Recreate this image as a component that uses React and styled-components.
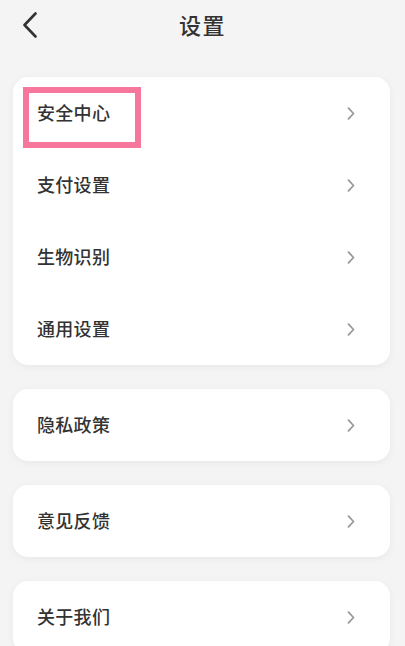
import React from "react";
import styled, { createGlobalStyle } from "styled-components";

const Global = createGlobalStyle`
  html, body {
    margin: 0;
    padding: 0;
    background: #f4f4f4;
  }
  * {
    box-sizing: border-box;
  }
`;

const Page = styled.div`
  min-height: 100vh;
  background: #f4f4f4;
  font-family: "Noto Sans CJK SC", "Noto Sans", sans-serif;
  color: #333;
`;

const Header = styled.header`
  position: relative;
  height: 48px;
  display: flex;
  align-items: center;
  justify-content: center;
`;

const Back = styled.button`
  position: absolute;
  left: 18px;
  top: 9px;
  width: 24px;
  height: 32px;
  padding: 0;
  border: 0;
  background: none;
  display: flex;
  align-items: center;
  justify-content: center;
`;

const Title = styled.h1`
  margin: 0;
  font-size: 22px;
  line-height: 1;
  font-weight: 500;
  letter-spacing: 1.5px;
  color: #333;
`;

const List = styled.div`
  display: flex;
  flex-direction: column;
  gap: 24px;
  padding: 29px 15px 0 13px;
`;

const Card = styled.section`
  background: #fff;
  border-radius: 15px;
  box-shadow: 0 2px 8px rgba(0, 0, 0, 0.05);
  overflow: hidden;
`;

const Row = styled.div`
  position: relative;
  height: 72px;
  display: flex;
  align-items: center;
  justify-content: space-between;
  padding: 0 35px 0 24px;
`;

const Label = styled.span`
  font-size: 18px;
  line-height: 1;
  font-weight: 500;
  letter-spacing: 0.3px;
  color: #333;
  margin-top: -3px;
`;

const Mark = styled.div`
  position: absolute;
  left: 10px;
  top: 10px;
  width: 118px;
  height: 61px;
  border: 6px solid #f7769b;
  pointer-events: none;
`;

const Chevron = () => (
  <svg width="8" height="13" viewBox="0 0 8 13">
    <path d="M1.5 1.2 L6.5 6.5 L1.5 11.8" fill="none" stroke="#999" strokeWidth="1.8" strokeLinecap="round" strokeLinejoin="round" />
  </svg>
);

const BackIcon = () => (
  <svg width="16" height="26" viewBox="0 0 16 26">
    <path d="M13.5 1.5 L2.5 13 L13.5 24.5" fill="none" stroke="#333" strokeWidth="2.6" strokeLinecap="round" strokeLinejoin="round" />
  </svg>
);

const groups = [
  ["安全中心", "支付设置", "生物识别", "通用设置"],
  ["隐私政策"],
  ["意见反馈"],
  ["关于我们"],
];

export default function App() {
  return (
    <Page>
      <Global />
      <Header>
        <Back aria-label="返回">
          <BackIcon />
        </Back>
        <Title>设置</Title>
      </Header>
      <List>
        {groups.map((items, g) => (
          <Card key={g}>
            {items.map((name, i) => (
              <Row key={name}>
                <Label>{name}</Label>
                <Chevron />
                {g === 0 && i === 0 && <Mark />}
              </Row>
            ))}
          </Card>
        ))}
      </List>
    </Page>
  );
}
